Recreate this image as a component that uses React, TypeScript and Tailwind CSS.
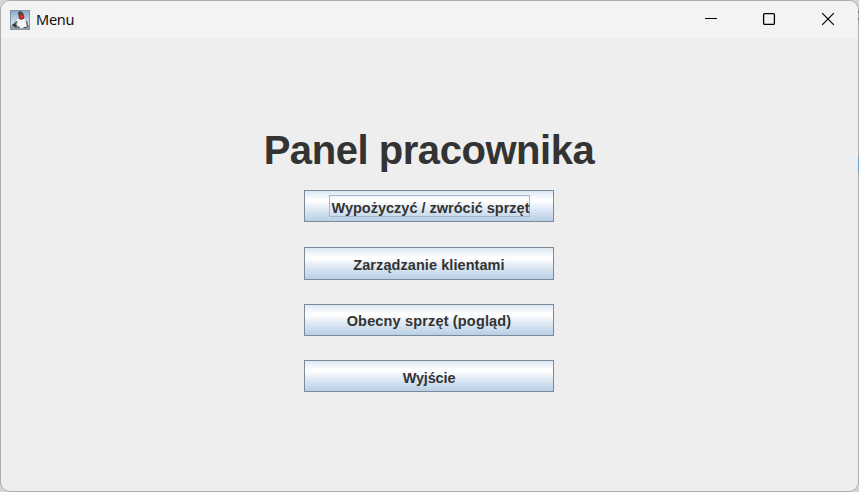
import type { ReactNode } from "react";

function DukeIcon() {
  return (
    <svg width="20" height="20" viewBox="0 0 20 20" className="shrink-0">
      <defs>
        <linearGradient id="sky" x1="0" y1="0" x2="0" y2="1">
          <stop offset="0" stopColor="#8aa5c0" />
          <stop offset="0.5" stopColor="#c3d4e3" />
          <stop offset="1" stopColor="#e6ebef" />
        </linearGradient>
      </defs>
      <rect x="0.5" y="0.5" width="19" height="19" fill="url(#sky)" stroke="#7f97ae" />
      <path d="M1 15.5 L5 14 L19 15 V19 H1 Z" fill="#98a2aa" />
      <path d="M6 9.5 L14.5 7.5 L16 12 L17 17.5 L11 18 L6 17 Z" fill="#f4f4f2" />
      <path d="M8 2.5 Q10.5 0 13 3 Q14.5 5 14.5 8.5 L11 10 L9 8.5 Z" fill="#45464a" />
      <path d="M5 11.5 L7 10.5 L7.5 12.5 L6 15 L4 14 Z" fill="#747d86" />
      <path d="M2 14.5 L5 13 L7.5 16 L4 17 Z" fill="#343a40" />
      <path d="M15.5 10 L17.5 12 L18.5 17 L17 17 Z" fill="#5f6870" />
      <path d="M5 17.2 H9.5 M13.5 17.5 H17" stroke="#41474d" strokeWidth="1.2" />
      <circle cx="11.5" cy="6.8" r="2.3" fill="#d51e1b" />
      <circle cx="11.8" cy="6.3" r="0.9" fill="#f5544b" />
    </svg>
  );
}

function TitleBar() {
  return (
    <header className="flex h-[37px] shrink-0 items-center bg-[#f3f3f3] pl-[9px]">
      <DukeIcon />
      <span className="mb-[2px] ml-[6px] font-['Noto_Sans','Open_Sans',sans-serif] text-[14.5px] leading-5 tracking-[-0.25px] text-[#111]">
        Menu
      </span>
      <div className="ml-auto flex h-full text-black">
        <button className="flex w-[58px] items-center justify-center pb-px" aria-label="Minimize">
          <svg width="14" height="14" viewBox="0 0 14 14" stroke="currentColor" strokeWidth="1.1">
            <path d="M1 6.5 H13" />
          </svg>
        </button>
        <button className="flex w-[58px] items-center justify-center pb-px" aria-label="Maximize">
          <svg width="14" height="14" viewBox="0 0 14 14" fill="none" stroke="currentColor" strokeWidth="1.3">
            <rect x="1.6" y="1.6" width="10.8" height="10.8" rx="1.2" />
          </svg>
        </button>
        <button className="flex w-[60px] items-center justify-center pb-px" aria-label="Close">
          <svg width="14" height="14" viewBox="0 0 14 14" stroke="currentColor" strokeWidth="1.2">
            <path d="M1.2 1.2 L12.8 12.8 M12.8 1.2 L1.2 12.8" />
          </svg>
        </button>
      </div>
    </header>
  );
}

function MenuButton({ children, className = "", focused = false }: { children: ReactNode; className?: string; focused?: boolean }) {
  return (
    <button
      className={`flex w-[250px] items-center justify-center border border-[#7a8a99] bg-[linear-gradient(180deg,#dde8f3_0%,#ffffff_30%,#ffffff_33%,#dde8f3_62%,#b8cfe5_100%)] text-[14.5px] leading-[20px] font-bold whitespace-nowrap text-[#333] ${className}`}
    >
      <span className={focused ? "ml-px flex h-[22px] w-[201px] items-end justify-center border border-[#a3b8cc]" : ""}>
        <span className={focused ? "translate-x-px translate-y-[2px]" : ""}>{children}</span>
      </span>
    </button>
  );
}

export default function App() {
  return (
    <div className="relative h-[492px] w-[859px] overflow-hidden bg-[#d4d5d7] font-['Liberation_Sans',Arial,sans-serif]">
      <div className="flex h-full flex-col overflow-hidden rounded-[10px] border border-[#adadad] bg-[#eeeeee]">
        <TitleBar />
        <main className="flex flex-1 flex-col items-center pr-px">
          <h1 className="mt-[88px] h-[64px] text-[40px] leading-[48px] font-bold tracking-[-0.45px] whitespace-nowrap text-[#333]">
            Panel pracownika
          </h1>
          <MenuButton className="h-[32px]" focused>Wypożyczyć / zwrócić sprzęt</MenuButton>
          <MenuButton className="mt-[25px] h-[33px] pt-[3px] tracking-[0.07px]">Zarządzanie klientami</MenuButton>
          <MenuButton className="mt-[24px] h-[32px] pt-[2px] tracking-[0.16px]">Obecny sprzęt (pogląd)</MenuButton>
          <MenuButton className="mt-[24px] h-[32px] pt-[3px] tracking-[-0.15px]">Wyjście</MenuButton>
        </main>
      </div>
      <div className="absolute top-[157px] right-0 h-[15px] w-px bg-[#6f9cc8]" />
      <div className="absolute top-[11px] right-0 h-[2px] w-px bg-[#6b7480]" />
      <div className="absolute top-[18px] right-0 h-[2px] w-px bg-[#6b7f96]" />
    </div>
  );
}
